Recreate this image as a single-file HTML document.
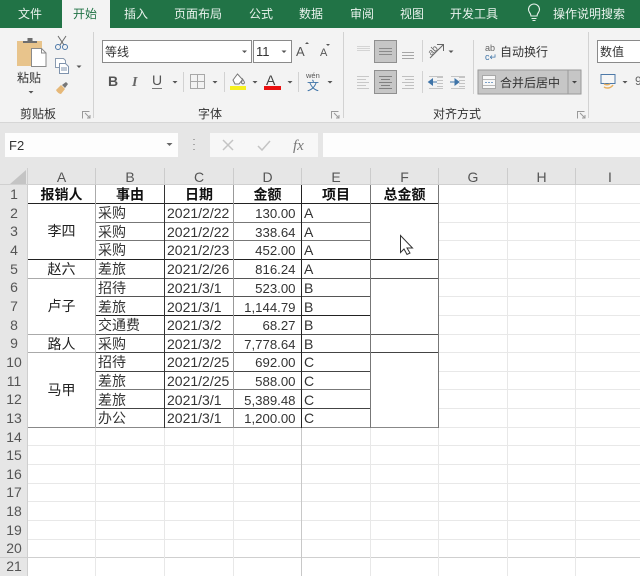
<!DOCTYPE html>
<html lang="zh">
<head>
<meta charset="utf-8">
<title>Excel</title>
<style>
html,body{margin:0;padding:0;width:640px;height:576px;overflow:hidden;background:#fff}
svg{display:block;font-family:"Liberation Sans","Noto Sans CJK SC",sans-serif;filter:blur(.3px)}
.tab{font-size:12px;fill:#e8f2ec}
.rb{font-size:12px;fill:#333}
.num{font-size:13.2px;fill:#333;text-anchor:end}
.dt{font-size:14px;fill:#333}
.c{font-size:14px;fill:#222;text-anchor:middle}
.h{font-size:14px;fill:#111;font-weight:bold;text-anchor:middle}
.rh{font-size:14px;fill:#555;text-anchor:middle}
.ch{font-size:14px;fill:#555;text-anchor:middle}
.g line{stroke:#e8e8e8;stroke-width:1}
.ic{stroke:#999;stroke-width:1;fill:none}
.icd{stroke:#777;stroke-width:1;fill:none}
</style>
</head>
<body>
<svg width="640" height="576" viewBox="0 0 640 576" xmlns="http://www.w3.org/2000/svg">
<rect width="640" height="576" fill="#fff"/>
<!-- title tabs -->
<rect width="640" height="28" fill="#217346"/>
<rect x="62" y="0" width="48" height="29" fill="#f3f3f3"/>
<rect y="28" x="0" width="640" height="94" fill="#f3f3f3"/>
<rect y="122" x="0" width="640" height="46" fill="#e6e6e6"/>
<rect y="122" x="0" width="640" height="1" fill="#d6d6d6"/>
<text class="tab" x="18" y="18">文件</text>
<text x="73" y="18" font-size="12" fill="#217346">开始</text>
<text class="tab" x="124" y="18">插入</text>
<text class="tab" x="174" y="18">页面布局</text>
<text class="tab" x="249" y="18">公式</text>
<text class="tab" x="299" y="18">数据</text>
<text class="tab" x="350" y="18">审阅</text>
<text class="tab" x="400" y="18">视图</text>
<text class="tab" x="450" y="18">开发工具</text>
<text class="tab" x="553" y="18">操作说明搜索</text>
<path d="M531 16c0-3-2.500-3.500-2.500-6.500a5.500 5.500 0 0 1 11 0c0 3-2.500 3.500-2.500 6.500zM531.500 18.500h5M532.500 20.500h3" fill="none" stroke="#e8f2ec" stroke-width="1.100"/>

<!-- ribbon separators -->
<g fill="#d2d2d2">
<rect x="93" y="32" width="1" height="86"/>
<rect x="343" y="32" width="1" height="86"/>
<rect x="588" y="32" width="1" height="86"/>
<rect x="183" y="72" width="1" height="20"/>
<rect x="224" y="72" width="1" height="20"/>
<rect x="298" y="72" width="1" height="20"/>
<rect x="422" y="40" width="1" height="22"/>
<rect x="422" y="71" width="1" height="22"/>
<rect x="473" y="40" width="1" height="54"/>
</g>

<!-- clipboard group -->
<rect x="17" y="41" width="25" height="25" fill="#e8c48c"/>
<path d="M23 43v-2h4.500v-3h5v3h4.500v2z" fill="#6e6e6e"/>
<path d="M31.500 48.500h10l4.500 4.500v13.500h-14.500z" fill="#fff" stroke="#8a8a8a"/>
<path d="M41.500 48.500v4.500h4.500" fill="none" stroke="#8a8a8a"/>
<text class="rb" x="17" y="82">粘贴</text>
<path d="M28.500 91h5l-2.500 2.500z" fill="#555"/>
<path d="M58 36l6 9M66 36l-6 9" stroke="#6a6a6a" fill="none"/>
<circle cx="58" cy="47" r="2.500" fill="none" stroke="#4a77a8"/>
<circle cx="65" cy="47" r="2.500" fill="none" stroke="#4a77a8"/>
<path d="M55.500 58.500h8l2 2v7h-10z" fill="#fff" stroke="#8a9bb0"/>
<path d="M59.500 63.500h6l3 3v7h-9z" fill="#fff" stroke="#7f93ad"/>
<path d="M61 68h6M61 70h6" stroke="#7f93ad"/>
<path d="M76.500 65.500h5l-2.500 2.500z" fill="#555"/>
<path d="M56 90l5-5 4 4-4 5c-2 0-4-2-5-4z" fill="#e6b878"/>
<path d="M62 85l4-3 2 2-3 4z" fill="#777"/>
<text class="rb" x="20" y="118">剪贴板</text>
<path d="M82.500 118.500v-7h7M85 113l5 5M90 115v3h-3" class="ic"/>

<!-- font group -->
<rect x="102.500" y="40.500" width="149" height="22" fill="#fff" stroke="#8a8a8a"/>
<rect x="253.500" y="40.500" width="38" height="22" fill="#fff" stroke="#8a8a8a"/>
<text class="rb" x="105" y="56" font-size="12">等线</text>
<text x="256" y="56" font-size="13" fill="#333">11</text>
<path d="M242 50.500h5l-2.500 2.500zM281.500 50.500h5l-2.500 2.500z" fill="#555"/>
<text x="296" y="56" font-size="13" fill="#555">A</text>
<path d="M305 44l2-2 2 2z" fill="#555"/>
<text x="320" y="56" font-size="11" fill="#555">A</text>
<path d="M326 44h4l-2 2z" fill="#555"/>
<text x="108" y="86" font-size="14" font-weight="bold" fill="#555">B</text>
<text x="132" y="86" font-size="14" font-style="italic" font-weight="bold" fill="#666" font-family="Liberation Serif">I</text>
<text x="152" y="85" font-size="14" fill="#555">U</text>
<rect x="152" y="88" width="10" height="1" fill="#777"/>
<path d="M172.500 81h5l-2.500 2.500zM212.500 81h5l-2.500 2.500zM252.500 81h5l-2.500 2.500zM287.500 81h5l-2.500 2.500zM327.500 81h5l-2.500 2.500z" fill="#555"/>
<path d="M190.500 74.500h14v14h-14zM197.500 74.500v14M190.500 81.500h14" fill="none" stroke="#a8a8a8"/>
<path d="M233 80l4.500-6 5 5.500-3.500 4.500h-4zM242.500 79c1 1.500 2 2.500 2 4l-1.500 1-1.500-1z" fill="#fff" stroke="#777"/>
<rect x="230" y="86" width="16" height="4" fill="#f6f01f"/>
<text x="266" y="85" font-size="14" fill="#444">A</text>
<rect x="264" y="86" width="17" height="4" fill="#ea1010"/>
<text x="306" y="78" font-size="7.500" fill="#555">wén</text>
<text x="307" y="90" font-size="12" fill="#3f74a8">文</text>

<text class="rb" x="198" y="118">字体</text>
<path d="M331.500 118.500v-7h7M334 113l5 5M339 115v3h-3" class="ic"/>

<!-- alignment -->
<rect x="374.500" y="40.500" width="22" height="22" fill="#c6c6c6" stroke="#8f8f8f"/>
<rect x="374.500" y="70.500" width="22" height="23" fill="#c6c6c6" stroke="#8f8f8f"/>
<path d="M357 46.500h13M357 48.500h13M357 50.500h13" stroke="#d4d4d4"/>
<path d="M379 48.500h13M379 51.500h13M379 54.500h13" stroke="#8a8a8a"/>
<path d="M402 52.500h12M402 55.500h12M402 58.500h12" stroke="#a6a6a6"/>
<path d="M357 76.500h12M357 79.500h9M357 82.500h12M357 85.500h9M357 88.500h12" stroke="#c8c8c8"/>
<path d="M379 76.500h13M381 79.500h9M379 82.500h13M381 85.500h9M379 88.500h13" stroke="#808080"/>
<path d="M402 76.500h12M405 79.500h9M402 82.500h12M405 85.500h9M402 88.500h12" stroke="#c0c0c0"/>
<path d="M430 58l13-13M437 44.500h6.500v6.500" fill="none" stroke="#666"/>
<text x="428" y="54" font-size="9" fill="#666" transform="rotate(-45 432 51)">ab</text>
<path d="M448.500 50.500h5l-2.500 2.500z" fill="#555"/>
<path d="M433 82h4M428.500 82l4-3v6z" fill="#3f74a8" stroke="#3f74a8"/>
<path d="M437 77.500h6M437 80.500h6M437 83.500h6M437 86.500h6M429 76.500h14M429 88.500h14" stroke="#c4c4c4"/>
<path d="M450 82h5M459 82l-4-3v6z" fill="#3f74a8" stroke="#3f74a8"/>
<path d="M459 77.500h6M459 80.500h6M459 83.500h6M459 86.500h6M451 76.500h14M451 88.500h14" stroke="#c4c4c4"/>
<text x="485" y="51" font-size="9" fill="#666">ab</text>
<text x="485" y="60" font-size="9" fill="#3f74a8">c↵</text>
<text class="rb" x="500" y="56">自动换行</text>
<rect x="478" y="70" width="90" height="24" fill="#c6c6c6" stroke="#9a9a9a"/>
<rect x="568" y="70" width="13" height="24" fill="#c6c6c6" stroke="#9a9a9a"/>
<rect x="482.500" y="75.500" width="13" height="13" fill="#f8f8f8" stroke="#a8a8a8"/>
<path d="M483 79.500h12M483 85.500h12" stroke="#b8b8b8"/>
<path d="M485 82.500h8" stroke="#7ea2c8" stroke-dasharray="2 1"/>
<text class="rb" x="500" y="87" font-size="12.500">合并后居中</text>
<path d="M572 81h5l-2.500 2.500z" fill="#444"/>
<text class="rb" x="433" y="118">对齐方式</text>
<path d="M577.500 118.500v-7h7M580 113l5 5M585 115v3h-3" class="ic"/>

<!-- number -->
<rect x="597.500" y="40.500" width="50" height="22" fill="#fff" stroke="#8a8a8a"/>
<text class="rb" x="600" y="56">数值</text>
<rect x="601" y="74.500" width="14" height="9" fill="#f6f6f6" stroke="#4d79a8"/>
<path d="M604 87c3 2 7 1 9-2M604 84c2 1 4 1 6 0" stroke="#e8b060" fill="none" stroke-width="1.500"/>
<path d="M622.500 81h5l-2.500 2.500z" fill="#555"/>
<text x="635" y="85" font-size="12" fill="#666">9</text>

<!-- formula bar -->
<rect x="5" y="133" width="173" height="24" fill="#fdfdfd"/>
<rect x="210" y="133" width="108" height="24" fill="#f7f7f7"/>
<rect x="323" y="133" width="317" height="24" fill="#fdfdfd"/>
<text x="9" y="150" font-size="13" fill="#333">F2</text>
<path d="M166.500 143h6l-3 3z" fill="#666"/>
<path d="M193 139.500h2M193 144.500h2M193 149.500h2" stroke="#a8a8a8"/>
<path d="M223 140l10 10M233 140l-10 10" stroke="#c4c4c4" stroke-width="1.500"/>
<path d="M258 146l4 4 8-9" stroke="#c4c4c4" stroke-width="1.500" fill="none"/>
<text x="293" y="150" font-size="15" font-style="italic" fill="#777" font-family="Liberation Serif">fx</text>

<!-- sheet headers -->
<rect x="0" y="168" width="640" height="17" fill="#e6e6e6"/>
<rect x="0" y="185" width="28" height="391" fill="#e6e6e6"/>
<path d="M10 184l16-14v14z" fill="#c4c4c4"/>
<rect x="0" y="184" width="640" height="1" fill="#d0d0d0"/>
<rect x="27" y="168" width="1" height="408" fill="#cfcfcf"/>
<g fill="#cccccc">
<rect x="95" y="168" width="1" height="17"/>
<rect x="164" y="168" width="1" height="17"/>
<rect x="233" y="168" width="1" height="17"/>
<rect x="301" y="168" width="1" height="17"/>
<rect x="370" y="168" width="1" height="17"/>
<rect x="438" y="168" width="1" height="17"/>
<rect x="507" y="168" width="1" height="17"/>
<rect x="575" y="168" width="1" height="17"/>
</g>
<text class="ch" x="61.500" y="182">A</text>
<text class="ch" x="130" y="182">B</text>
<text class="ch" x="199" y="182">C</text>
<text class="ch" x="267.500" y="182">D</text>
<text class="ch" x="336" y="182">E</text>
<text class="ch" x="404.500" y="182">F</text>
<text class="ch" x="473" y="182">G</text>
<text class="ch" x="541.500" y="182">H</text>
<text class="ch" x="610" y="182">I</text>
<g>
<text class="rh" x="14" y="199">1</text>
<text class="rh" x="14" y="218">2</text>
<text class="rh" x="14" y="236">3</text>
<text class="rh" x="14" y="255">4</text>
<text class="rh" x="14" y="274">5</text>
<text class="rh" x="14" y="292">6</text>
<text class="rh" x="14" y="311">7</text>
<text class="rh" x="14" y="330">8</text>
<text class="rh" x="14" y="348">9</text>
<text class="rh" x="14" y="367">10</text>
<text class="rh" x="14" y="386">11</text>
<text class="rh" x="14" y="404">12</text>
<text class="rh" x="14" y="423">13</text>
<text class="rh" x="14" y="442">14</text>
<text class="rh" x="14" y="460">15</text>
<text class="rh" x="14" y="479">16</text>
<text class="rh" x="14" y="497">17</text>
<text class="rh" x="14" y="516">18</text>
<text class="rh" x="14" y="535">19</text>
<text class="rh" x="14" y="553">20</text>
<text class="rh" x="14" y="571">21</text>
</g>

<!-- gridlines -->
<g class="g" shape-rendering="crispEdges">
<line x1="28" x2="640" y1="203.500" y2="203.500"/>
<line x1="28" x2="640" y1="222.500" y2="222.500"/>
<line x1="28" x2="640" y1="240.500" y2="240.500"/>
<line x1="28" x2="640" y1="259.500" y2="259.500"/>
<line x1="28" x2="640" y1="278.500" y2="278.500"/>
<line x1="28" x2="640" y1="296.500" y2="296.500"/>
<line x1="28" x2="640" y1="315.500" y2="315.500"/>
<line x1="28" x2="640" y1="334.500" y2="334.500"/>
<line x1="28" x2="640" y1="352.500" y2="352.500"/>
<line x1="28" x2="640" y1="371.500" y2="371.500"/>
<line x1="28" x2="640" y1="389.500" y2="389.500"/>
<line x1="28" x2="640" y1="408.500" y2="408.500"/>
<line x1="28" x2="640" y1="427.500" y2="427.500"/>
<line x1="28" x2="640" y1="445.500" y2="445.500"/>
<line x1="28" x2="640" y1="464.500" y2="464.500"/>
<line x1="28" x2="640" y1="483.500" y2="483.500"/>
<line x1="28" x2="640" y1="501.500" y2="501.500"/>
<line x1="28" x2="640" y1="520.500" y2="520.500"/>
<line x1="28" x2="640" y1="539.500" y2="539.500"/>
<line x1="0" x2="640" y1="557.500" y2="557.500" style="stroke:#cfcfcf"/>
<line x1="95.500" x2="95.500" y1="427" y2="576"/>
<line x1="164.500" x2="164.500" y1="427" y2="576"/>
<line x1="233.500" x2="233.500" y1="427" y2="576"/>
<line x1="301.500" x2="301.500" y1="427" y2="576" style="stroke:#c8c8c8"/>
<line x1="370.500" x2="370.500" y1="427" y2="576"/>
<line x1="438.500" x2="438.500" y1="185" y2="576"/>
<line x1="507.500" x2="507.500" y1="185" y2="576"/>
<line x1="575.500" x2="575.500" y1="185" y2="576"/>
</g>
<!-- merged white covers -->
<rect x="28" y="204" width="67" height="55" fill="#fff"/>
<rect x="28" y="279" width="67" height="55" fill="#fff"/>
<rect x="28" y="353" width="67" height="74" fill="#fff"/>
<rect x="371" y="204" width="67" height="55" fill="#fff"/>
<rect x="371" y="279" width="67" height="55" fill="#fff"/>
<rect x="371" y="353" width="67" height="74" fill="#fff"/>

<!-- table borders -->
<g shape-rendering="crispEdges" stroke-width="1" fill="none">
<path d="M28 203.500h411M28 259.500h411" stroke="#222"/>
<path d="M95 222.500h275M95 240.500h275" stroke="#777"/>
<path d="M28 278.500h67" stroke="#aaa"/>
<path d="M95 278.500h344" stroke="#555"/>
<path d="M95 296.500h275" stroke="#555"/>
<path d="M95 315.500h275" stroke="#222"/>
<path d="M28 334.500h67" stroke="#aaa"/>
<path d="M95 334.500h344" stroke="#555"/>
<path d="M28 352.500h67" stroke="#aaa"/>
<path d="M95 352.500h344" stroke="#444"/>
<path d="M95 371.500h275" stroke="#444"/>
<path d="M95 389.500h275" stroke="#777"/>
<path d="M95 408.500h275" stroke="#444"/>
<path d="M28 427.500h411" stroke="#888"/>
<path d="M95.500 185v243" stroke="#aaa"/>
<path d="M164.500 185v243" stroke="#333"/>
<path d="M233.500 185v243" stroke="#999"/>
<path d="M301.500 185v243" stroke="#222"/>
<path d="M370.500 185v243" stroke="#777"/>
<path d="M438.500 185v243" stroke="#777"/>
</g>

<!-- header row -->
<text class="h" x="61.500" y="199.500">报销人</text>
<text class="h" x="130" y="199.500">事由</text>
<text class="h" x="199" y="199.500">日期</text>
<text class="h" x="267.500" y="199.500">金额</text>
<text class="h" x="336" y="199.500">项目</text>
<text class="h" x="404.500" y="199.500">总金额</text>

<!-- merged A -->
<text class="c" x="61.500" y="236">李四</text>
<text class="c" x="61.500" y="274">赵六</text>
<text class="c" x="61.500" y="311">卢子</text>
<text class="c" x="61.500" y="349">路人</text>
<text class="c" x="61.500" y="395">马甲</text>

<!-- B -->
<g class="dt">
<text x="98" y="218">采购</text>
<text x="98" y="237">采购</text>
<text x="98" y="255">采购</text>
<text x="98" y="274">差旅</text>
<text x="98" y="293">招待</text>
<text x="98" y="312">差旅</text>
<text x="98" y="330">交通费</text>
<text x="98" y="349">采购</text>
<text x="98" y="367">招待</text>
<text x="98" y="386">差旅</text>
<text x="98" y="405">差旅</text>
<text x="98" y="423">办公</text>
</g>
<!-- C -->
<g class="dt">
<text x="167" y="218">2021/2/22</text>
<text x="167" y="237">2021/2/22</text>
<text x="167" y="255">2021/2/23</text>
<text x="167" y="274">2021/2/26</text>
<text x="167" y="293">2021/3/1</text>
<text x="167" y="312">2021/3/1</text>
<text x="167" y="330">2021/3/2</text>
<text x="167" y="349">2021/3/2</text>
<text x="167" y="367">2021/2/25</text>
<text x="167" y="386">2021/2/25</text>
<text x="167" y="405">2021/3/1</text>
<text x="167" y="423">2021/3/1</text>
</g>
<!-- D -->
<text class="num" x="295.500" y="218">130.00</text>
<text class="num" x="295.500" y="237">338.64</text>
<text class="num" x="295.500" y="255">452.00</text>
<text class="num" x="295.500" y="274">816.24</text>
<text class="num" x="295.500" y="293">523.00</text>
<text class="num" x="295.500" y="312">1,144.79</text>
<text class="num" x="295.500" y="330">68.27</text>
<text class="num" x="295.500" y="349">7,778.64</text>
<text class="num" x="295.500" y="367">692.00</text>
<text class="num" x="295.500" y="386">588.00</text>
<text class="num" x="295.500" y="405">5,389.48</text>
<text class="num" x="295.500" y="423">1,200.00</text>
<!-- E -->
<g class="dt">
<text x="304" y="218">A</text>
<text x="304" y="237">A</text>
<text x="304" y="255">A</text>
<text x="304" y="274">A</text>
<text x="304" y="293">B</text>
<text x="304" y="312">B</text>
<text x="304" y="330">B</text>
<text x="304" y="349">B</text>
<text x="304" y="367">C</text>
<text x="304" y="386">C</text>
<text x="304" y="405">C</text>
<text x="304" y="423">C</text>
</g>

<!-- cursor -->
<path d="M400.500 235.500v17l3.500-3.500 3 5.500 3-1.500-3-5h5.500z" fill="#fff" stroke="#333"/>
</svg>
</body>
</html>
